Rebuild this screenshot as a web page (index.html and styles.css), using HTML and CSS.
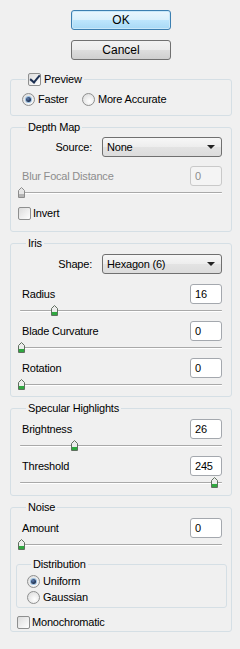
FILE: index.html
```html
<!DOCTYPE html>
<html lang="en">
<head>
  <title>Lens Blur</title>
  <meta name="viewport" content="width=device-width, initial-scale=1">
  <meta charset="UTF-8">
  <link rel="stylesheet" href="styles.css">
</head>
<body>
  <div class="dialog">
    <div class="actions">
      <button class="btn btn-default">OK</button>
      <button class="btn">Cancel</button>
    </div>

    <fieldset class="group">
      <legend class="legend-check"><span class="check checked"></span>Preview</legend>
      <div class="radio-row">
        <label class="opt"><span class="radio on"></span>Faster</label>
        <label class="opt"><span class="radio"></span>More Accurate</label>
      </div>
    </fieldset>

    <fieldset class="group group-depth">
      <legend>Depth Map</legend>
      <div class="select-row">
        <span class="select-label">Source:</span>
        <div class="select">None</div>
      </div>
      <div class="field-row field-first disabled">
        <span class="field-label">Blur Focal Distance</span>
        <span class="num">0</span>
      </div>
      <div class="slider">
        <div class="thumb-range">
          <svg class="thumb" style="left: 0%" width="7" height="11" viewBox="0 0 7 11"><path d="M3.5 .5 L6.5 3.5 V10.5 H.5 V3.5 Z" fill="#e6e6e6" stroke="#8c8c8c"/><rect x="1" y="7" width="5" height="3" fill="#b5b5b5"/></svg>
        </div>
      </div>
      <label class="opt opt-check"><span class="check"></span>Invert</label>
    </fieldset>

    <fieldset class="group group-iris">
      <legend>Iris</legend>
      <div class="select-row">
        <span class="select-label">Shape:</span>
        <div class="select">Hexagon (6)</div>
      </div>
      <div class="field-row field-first">
        <span class="field-label">Radius</span>
        <span class="num">16</span>
      </div>
      <div class="slider">
        <div class="thumb-range">
          <svg class="thumb" style="left: 16.5%" width="7" height="11" viewBox="0 0 7 11"><path d="M3.5 .5 L6.5 3.5 V10.5 H.5 V3.5 Z" fill="#ececec" stroke="#5f6f5f"/><rect x="1" y="7" width="5" height="3" fill="#2fa83f"/></svg>
        </div>
      </div>
      <div class="field-row">
        <span class="field-label">Blade Curvature</span>
        <span class="num">0</span>
      </div>
      <div class="slider">
        <div class="thumb-range">
          <svg class="thumb" style="left: 0%" width="7" height="11" viewBox="0 0 7 11"><path d="M3.5 .5 L6.5 3.5 V10.5 H.5 V3.5 Z" fill="#ececec" stroke="#5f6f5f"/><rect x="1" y="7" width="5" height="3" fill="#2fa83f"/></svg>
        </div>
      </div>
      <div class="field-row">
        <span class="field-label">Rotation</span>
        <span class="num">0</span>
      </div>
      <div class="slider">
        <div class="thumb-range">
          <svg class="thumb" style="left: 0%" width="7" height="11" viewBox="0 0 7 11"><path d="M3.5 .5 L6.5 3.5 V10.5 H.5 V3.5 Z" fill="#ececec" stroke="#5f6f5f"/><rect x="1" y="7" width="5" height="3" fill="#2fa83f"/></svg>
        </div>
      </div>
    </fieldset>

    <fieldset class="group group-specular">
      <legend>Specular Highlights</legend>
      <div class="field-row field-first">
        <span class="field-label">Brightness</span>
        <span class="num">26</span>
      </div>
      <div class="slider">
        <div class="thumb-range">
          <svg class="thumb" style="left: 26.5%" width="7" height="11" viewBox="0 0 7 11"><path d="M3.5 .5 L6.5 3.5 V10.5 H.5 V3.5 Z" fill="#ececec" stroke="#5f6f5f"/><rect x="1" y="7" width="5" height="3" fill="#2fa83f"/></svg>
        </div>
      </div>
      <div class="field-row">
        <span class="field-label">Threshold</span>
        <span class="num">245</span>
      </div>
      <div class="slider">
        <div class="thumb-range">
          <svg class="thumb" style="left: 97%" width="7" height="11" viewBox="0 0 7 11"><path d="M3.5 .5 L6.5 3.5 V10.5 H.5 V3.5 Z" fill="#ececec" stroke="#5f6f5f"/><rect x="1" y="7" width="5" height="3" fill="#2fa83f"/></svg>
        </div>
      </div>
    </fieldset>

    <fieldset class="group group-noise">
      <legend>Noise</legend>
      <div class="field-row field-first">
        <span class="field-label">Amount</span>
        <span class="num">0</span>
      </div>
      <div class="slider">
        <div class="thumb-range">
          <svg class="thumb" style="left: 0%" width="7" height="11" viewBox="0 0 7 11"><path d="M3.5 .5 L6.5 3.5 V10.5 H.5 V3.5 Z" fill="#ececec" stroke="#5f6f5f"/><rect x="1" y="7" width="5" height="3" fill="#2fa83f"/></svg>
        </div>
      </div>
      <fieldset class="group group-inner">
        <legend>Distribution</legend>
        <label class="opt opt-stack"><span class="radio on"></span>Uniform</label>
        <label class="opt opt-stack"><span class="radio"></span>Gaussian</label>
      </fieldset>
      <label class="opt opt-check opt-mono"><span class="check"></span>Monochromatic</label>
    </fieldset>
  </div>
</body>
</html>
```

FILE: styles.css
```css
body {
  font-family: "Liberation Sans", Arial, sans-serif;
  font-size: 11px;
  line-height: 14px;
  letter-spacing: -0.2px;
  margin: 0;
  padding: 0;
  background: #f0f0f0;
  color: #000;
  width: 240px;
}
.actions {
  display: flex;
  flex-direction: column;
  align-items: center;
  gap: 10px;
  padding: 10px 0 0 2px;
  margin-bottom: 12px;
}
.btn {
  width: 100px;
  height: 20px;
  padding: 0;
  font: inherit;
  font-size: 12px;
  border: 1px solid #707070;
  border-radius: 3px;
  background: linear-gradient(#f2f2f2, #ebebeb 50%, #dddddd 50%, #cfcfcf);
  color: #000;
}
.btn-default {
  border-color: #3c7fb1;
  background: linear-gradient(#eaf6fd, #d9f0fc 50%, #bee6fd 50%, #a7d9f5);
  box-shadow: inset 0 0 0 1px #c9e8f9;
}

/* group boxes */
.group {
  margin: 0 8px 4px 10px;
  border: 1px solid #d5dfe5;
  border-radius: 3px;
  padding: 0 9px 0 9px;
  min-width: 0;
}
.group legend {
  padding: 0 2px;
  margin-left: 6px;
  height: 14px;
  line-height: 14px;
}
.legend-check {
  display: flex;
  align-items: center;
}
.legend-check .check {
  margin: 0 3px 0 0;
}
.group-depth { padding-bottom: 11px; }
.group-iris { padding-bottom: 1px; }
.group-specular { padding-bottom: 2px; }
.group-noise { padding-bottom: 2px; }
.group-inner {
  margin: 2px -5px 0 -4px;
  padding: 0 10px 2px 10px;
}
.group-inner legend { margin-left: 4px; }

/* radios and checks */
.radio-row {
  display: flex;
  gap: 14px;
  margin: 6px 0 9px 2px;
  height: 14px;
}
.opt {
  display: flex;
  align-items: center;
}
.opt-stack {
  height: 16px;
}
.opt-stack:first-of-type { margin-top: 2px; }
.opt-check {
  margin: 3px 0 0 -2px;
  height: 14px;
}
.opt-mono {
  margin: 7px 0 0 -3px;
}
.radio {
  width: 13px;
  height: 13px;
  box-sizing: border-box;
  border: 1px solid #8e8f8f;
  border-radius: 50%;
  background: radial-gradient(circle at 60% 65%, #ffffff, #e2e2e2 75%);
  margin-right: 3px;
  position: relative;
  flex: none;
}
.radio.on::after {
  content: "";
  position: absolute;
  left: 3px;
  top: 3px;
  width: 5px;
  height: 5px;
  border-radius: 50%;
  background: radial-gradient(circle at 40% 35%, #5c7db0, #0c1d3a 80%);
  box-shadow: 0 0 0 1px #9bc0e2;
}
.check {
  width: 13px;
  height: 13px;
  box-sizing: border-box;
  border: 1px solid #8e8f8f;
  border-radius: 2px;
  background: linear-gradient(135deg, #dcdcdc, #ffffff);
  margin-right: 2px;
  position: relative;
  flex: none;
}
.check.checked::after {
  content: "";
  position: absolute;
  left: 3px;
  top: -1px;
  width: 4px;
  height: 8px;
  border: solid #1c2f52;
  border-width: 0 2px 2px 0;
  transform: rotate(40deg);
}

/* select boxes */
.select-row {
  display: flex;
  align-items: center;
  margin-top: 3px;
  height: 20px;
}
.group-iris .select-row { margin-top: 4px; }
.select-label {
  width: 72px;
  text-align: right;
  margin-right: 10px;
  flex: none;
}
.select {
  flex: 1;
  height: 20px;
  box-sizing: border-box;
  border: 1px solid #707070;
  border-radius: 3px;
  background: linear-gradient(#f7f7f7, #ededed 50%, #e3e3e3 50%, #dcdcdc);
  padding-left: 4px;
  line-height: 18px;
  position: relative;
}
.select::after {
  content: "";
  position: absolute;
  right: 6px;
  top: 7px;
  border-left: 4px solid transparent;
  border-right: 4px solid transparent;
  border-top: 4px solid #222;
}

/* numeric fields */
.field-row {
  display: flex;
  justify-content: space-between;
  align-items: center;
  height: 20px;
}
.field-first { margin-top: 10px; }
.group-depth .field-first { margin-top: 9px; }
.group-specular .field-first,
.group-noise .field-first { margin-top: 4px; }
.field-label { padding-left: 2px; }
.num {
  width: 32px;
  height: 20px;
  box-sizing: border-box;
  border: 1px solid #a4a8ae;
  border-radius: 3px;
  background: #fff;
  padding-left: 4px;
  line-height: 18px;
}
.disabled .field-label { color: #8d8d8d; }
.disabled .num {
  background: #f4f4f4;
  border-color: #c9c9c9;
  color: #8d8d8d;
}

/* sliders */
.slider {
  position: relative;
  height: 17px;
}
.slider::before {
  content: "";
  position: absolute;
  left: 0;
  right: 0;
  top: 6px;
  height: 1px;
  background: #a9a9a9;
  border-radius: 1px;
}
.slider::after {
  content: "";
  position: absolute;
  left: 0;
  right: 0;
  top: 7px;
  height: 1px;
  background: #fff;
}
.thumb-range {
  position: absolute;
  left: -2px;
  right: 5px;
  top: 1px;
  height: 11px;
}
.thumb {
  position: absolute;
  top: 0;
  z-index: 1;
  display: block;
}
```
